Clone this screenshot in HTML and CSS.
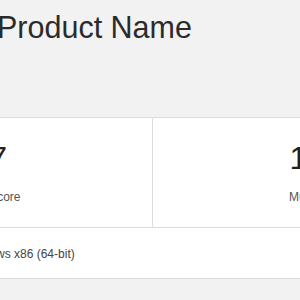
FILE: index.html
```html
<!DOCTYPE html>
<html lang="en">
<head>
<meta charset="utf-8">
<title>Product Name</title>
<link rel="stylesheet" href="styles.css">
</head>
<body>
<main class="page">
  <h1 class="title">Product Name</h1>
  <section class="card">
    <div class="scores">
      <div class="score-cell">
        <div class="score">1247</div>
        <div class="note">Single-Core Score</div>
      </div>
      <div class="score-cell">
        <div class="score">10234</div>
        <div class="note">Multi-Core Score</div>
      </div>
    </div>
    <div class="platform">Windows x86 (64-bit)</div>
  </section>
</main>
</body>
</html>
```
FILE: styles.css
```css
html, body {
  margin: 0;
  padding: 0;
  overflow: hidden;
}
body {
  background: #f2f2f2;
  font-family: "Liberation Sans", Arial, sans-serif;
  color: #333;
}
.page {
  margin-left: -3px;
  padding-top: 10px;
}
.title {
  margin: 0;
  font-size: 30.5px;
  line-height: 34px;
  font-weight: normal;
  color: #2b2b2b;
}
.card {
  margin-top: 73px;
  margin-left: -207px;
  width: 725px;
  background: #fff;
  border: 1px solid #dcdcdc;
  box-shadow: 0 1px 1px rgba(0, 0, 0, 0.06);
}
.scores {
  display: grid;
  grid-template-columns: 362px 362px;
  border-bottom: 1px solid #dcdcdc;
}
.score-cell {
  text-align: center;
  padding: 21px 0 22px;
}
.score-cell:first-child {
  border-right: 1px solid #dcdcdc;
}
.score {
  font-size: 32px;
  line-height: 38px;
  color: #222;
}
.note {
  margin-top: 12px;
  font-size: 12px;
  line-height: 16px;
  color: #555;
}
.platform {
  padding: 18px 0 16px 171px;
  font-size: 12px;
  line-height: 16px;
  color: #444;
}
```
